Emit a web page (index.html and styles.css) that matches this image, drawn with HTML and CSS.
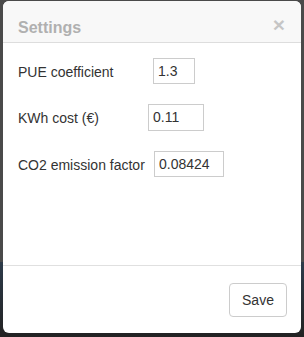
FILE: index.html
```html
<!DOCTYPE html>
<html>
<head>
<meta charset="utf-8">
<link rel="stylesheet" href="styles.css">
</head>
<body>
<div class="modal">
  <div class="modal-header">
    <h4 class="modal-title">Settings</h4>
    <span class="close">×</span>
  </div>
  <div class="modal-body">
    <div class="row row-pue">
      <label class="label">PUE coefficient</label>
      <input class="field" type="text" value="1.3">
    </div>
    <div class="row row-kwh">
      <label class="label">KWh cost (€)</label>
      <input class="field" type="text" value="0.11">
    </div>
    <div class="row row-co2">
      <label class="label">CO2 emission factor</label>
      <input class="field" type="text" value="0.08424">
    </div>
  </div>
  <div class="modal-footer">
    <button class="btn">Save</button>
  </div>
</div>
</body>
</html>
```

FILE: styles.css
```css
html, body {
  margin: 0;
  padding: 0;
  height: 100%;
}
body {
  background: linear-gradient(to bottom, #4a4a4a 0, #4a4a4a 262px, #2d3b4a 262px, #222 337px);
  font-family: "Liberation Sans", Arial, sans-serif;
  color: #333;
  padding-top: 1px;
  box-sizing: border-box;
}
.modal {
  margin-left: 3px;
  width: 298px;
  height: 332px;
  background: #fff;
  border-radius: 6px;
  overflow: hidden;
  display: flex;
  flex-direction: column;
}
.modal-header {
  height: 42px;
  box-sizing: border-box;
  padding: 17px 15px 0 15px;
  background: #f8f8f8;
  border-bottom: 1px solid #ddd;
  display: flex;
  justify-content: space-between;
  align-items: flex-start;
  flex: none;
}
.modal-title {
  margin: 0;
  font-size: 16px;
  line-height: 20px;
  font-weight: bold;
  color: #b0b0b0;
}
.close {
  font-size: 21px;
  font-weight: bold;
  line-height: 1;
  color: #000;
  opacity: 0.2;
  margin-top: -4px;
  margin-right: 1px;
}
.modal-body {
  flex: 1;
  padding: 15px 0 0 15px;
}
.row {
  display: flex;
  align-items: center;
  height: 26px;
}
.row + .row {
  margin-top: 20px;
}
.row-co2 {
  margin-top: 21px !important;
}
.label {
  font-size: 14px;
  flex: none;
  padding-top: 1px;
}
.field {
  box-sizing: border-box;
  height: 26px;
  border: 1px solid #ccc;
  border-radius: 0;
  padding: 0 4px;
  font-family: "Liberation Sans", Arial, sans-serif;
  font-size: 14px;
  color: #333;
  margin: 0;
  outline: none;
}
.row-pue .label { width: 135px; }
.row-pue .field { width: 42px; }
.row-kwh .label { width: 130px; }
.row-kwh .field { width: 56px; height: 27px; }
.row-co2 .label { width: 136px; }
.row-co2 .field { width: 70px; }
.modal-footer {
  flex: none;
  border-top: 1px solid #e0e0e0;
  padding: 17px 14px 16px 0;
  display: flex;
  justify-content: flex-end;
}
.btn {
  height: 34px;
  width: 58px;
  box-sizing: border-box;
  background: #fff;
  border: 1px solid #ccc;
  border-radius: 4px;
  font-family: "Liberation Sans", Arial, sans-serif;
  font-size: 14px;
  color: #333;
  padding: 0;
}
```
